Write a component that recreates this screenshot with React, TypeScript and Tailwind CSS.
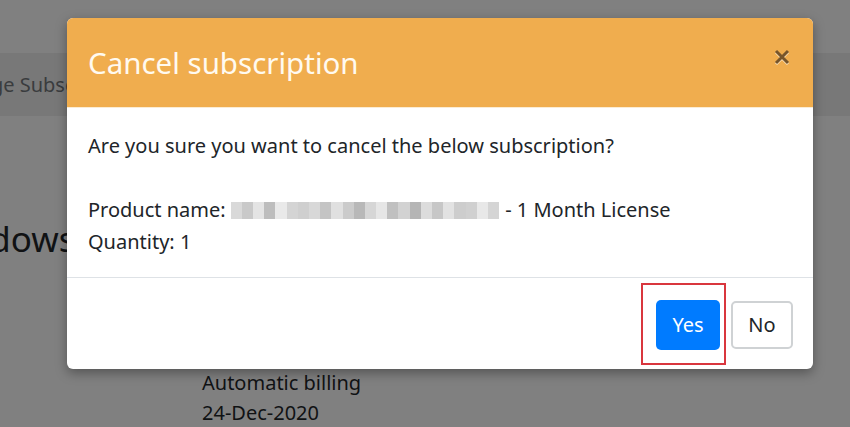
import React from 'react';

const mosaic = [
  '#d9d9d9', '#c9c9c9', '#e4e4e4', '#bdbdbd', '#e9e9e9', '#d4d4d4',
  '#cfcfcf', '#d8d8d8', '#c4c4c4', '#e0e0e0', '#cbcbcb', '#b8b8b8',
  '#d6d6d6', '#e6e6e6', '#c0c0c0', '#d2d2d2', '#b5b5b5', '#dcdcdc',
  '#c7c7c7', '#e2e2e2', '#cdcdcd', '#d0d0d0', '#e8e8e8', '#d5d5d5',
];

function Pixelated() {
  return (
    <span className="inline-flex h-[17px] items-stretch align-[-2px] ml-[5px] mr-[6px]">
      {mosaic.map((c, i) => (
        <span key={i} className="w-[11.2px] h-full" style={{ backgroundColor: c }} />
      ))}
    </span>
  );
}

function CloseIcon() {
  return (
    <svg width="16" height="17" viewBox="0 0 16 17" fill="none">
      <g stroke="#fbe6c4" strokeWidth="3">
        <path d="M2 3 L14 15 M14 3 L2 15" />
      </g>
      <g stroke="#77552a" strokeWidth="3">
        <path d="M2 2 L14 14 M14 2 L2 14" />
      </g>
    </svg>
  );
}

export default function App() {
  return (
    <div
      className="relative w-[850px] h-[427px] overflow-hidden bg-[#808080] text-[#101214]"
      style={{ fontFamily: '"Segoe UI", "Noto Sans", sans-serif' }}
    >
      {/* page behind the backdrop */}
      <div className="flex flex-col">
        <div className="h-[53px]" />
        <div className="h-[63px] bg-[#787878] flex items-center">
          <span className="ml-[-62px] text-[20px] text-[#3a3c3e] whitespace-nowrap">
            Manage Subscriptions
          </span>
        </div>
        <div className="h-[103px]" />
        <div className="ml-[-74px] text-[35px] leading-[40px] whitespace-nowrap">
          Windows
        </div>
        <div className="h-[109px]" />
        <div className="pl-[202px] text-[20px] leading-[30px]">
          <div>Automatic billing</div>
          <div>24-Dec-2020</div>
        </div>
      </div>

      {/* modal */}
      <div className="absolute inset-0 pl-[67px] pt-[18px]">
        <div className="w-[746px] rounded-[6px] bg-white shadow-[0_4px_12px_rgba(0,0,0,0.35)] overflow-hidden">
          <div className="h-[90px] bg-[#f0ad4e] border-b border-[#fbecd4] flex items-center justify-between pl-[21px] pr-[23px]">
            <h4 className="text-[29.5px] leading-[36px] text-[#fffaf0]">Cancel subscription</h4>
            <button className="mb-[10px]">
              <CloseIcon />
            </button>
          </div>
          <div className="pl-[21px] pr-[21px] pt-[22px] pb-[19px] text-[20px] leading-[32px] text-[#212529]">
            <p className="mb-[32px]">Are you sure you want to cancel the below subscription?</p>
            <p className="whitespace-nowrap">
              Product name:<Pixelated />- 1 Month License
            </p>
            <p>Quantity: 1</p>
          </div>
          <div className="h-[92px] border-t border-[#dee2e6] flex items-center justify-end gap-[11px] pr-[20px] pt-[3px]">
            <div className="relative">
              <button className="w-[64px] h-[50px] rounded-[5px] bg-[#007bff] text-white text-[20px]">
                Yes
              </button>
              <div className="absolute left-[-15px] top-[-17px] w-[85px] h-[82px] border-2 border-[#d9363e]" />
            </div>
            <button className="w-[62px] h-[48px] rounded-[5px] border-2 border-[#cfd2d4] text-[20px] text-[#212529]">
              No
            </button>
          </div>
        </div>
      </div>
    </div>
  );
}
